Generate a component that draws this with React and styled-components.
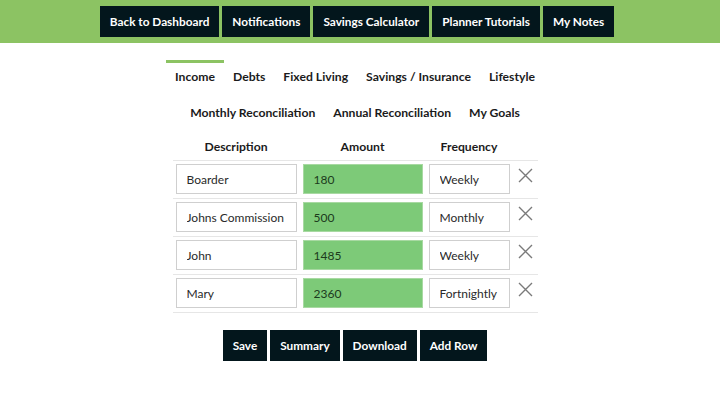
import React, { useState } from "react";
import styled, { createGlobalStyle } from "styled-components";

const GlobalStyle = createGlobalStyle`
  html, body {
    margin: 0;
    padding: 0;
    background: #ffffff;
    font-family: Lato, "Open Sans", Arial, sans-serif;
    color: #222;
  }
  * {
    box-sizing: border-box;
  }
`;

const Header = styled.header`
  background-color: #8cc363;
  height: 43px;
  padding: 6px 6px 0 0;
  display: flex;
  justify-content: center;
  align-items: flex-start;
  gap: 3px;
`;

const DarkButton = styled.button`
  height: 31px;
  padding: 0 10px;
  border: none;
  background-color: #03161c;
  color: #ffffff;
  font-family: Lato, sans-serif;
  font-weight: 700;
  font-size: 11.8px;
  cursor: pointer;
  white-space: nowrap;
`;

const Main = styled.main`
  width: 710px;
  display: flex;
  flex-direction: column;
  align-items: center;
  padding-top: 17px;
`;

const TabRow = styled.nav`
  display: flex;
  justify-content: center;
`;

const Tab = styled.div`
  padding: 4px 9px 9px;
  border-top: 3px solid ${(props) => (props.$active ? "#8cc363" : "transparent")};
  font-size: 12.2px;
  font-weight: 700;
  line-height: 20px;
  color: #1b1b1b;
  cursor: pointer;
  white-space: nowrap;
`;

const Table = styled.div`
  width: 365px;
  display: grid;
  grid-template-columns: 127px 126px 87px 25px;
  border-bottom: 1px solid #e6e6e6;
`;

const HeadCell = styled.div`
  padding: 5px 0 3px;
  line-height: 20px;
  font-size: 12.2px;
  font-weight: 700;
  text-align: center;
  color: #1b1b1b;
`;

const Cell = styled.div`
  border-top: 1px solid #e6e6e6;
  padding: 3px 3px 4px;
  display: flex;
  justify-content: center;
  align-items: flex-start;
`;

const Field = styled.input`
  width: 100%;
  height: 30px;
  padding: 0 9px 0 10px;
  border: 1px solid ${(props) => (props.$amount ? "#a8d9a2" : "#cfcfcf")};
  background-color: ${(props) => (props.$amount ? "#7dca78" : "#ffffff")};
  color: ${(props) => (props.$amount ? "#1c3a1c" : "#2a2a2a")};
  font-family: Lato, sans-serif;
  font-size: 12px;
  outline: none;
`;

const RemoveButton = styled.button`
  margin-top: 4px;
  padding: 0;
  border: none;
  background: none;
  cursor: pointer;
  line-height: 0;
`;

const Actions = styled.div`
  margin-top: 17px;
  display: flex;
  gap: 3px;
`;

const rowsData = [
  { id: 1, desc: "Boarder", amount: "180", freq: "Weekly" },
  { id: 2, desc: "Johns Commission", amount: "500", freq: "Monthly" },
  { id: 3, desc: "John", amount: "1485", freq: "Weekly" },
  { id: 4, desc: "Mary", amount: "2360", freq: "Fortnightly" },
];

const CloseIcon = () => (
  <svg width="15" height="15" viewBox="0 0 15 15">
    <path d="M1 1 L14 14 M14 1 L1 14" stroke="#7a7a7a" strokeWidth="1.4" fill="none" />
  </svg>
);

const App = () => {
  const [rows, setRows] = useState(rowsData);

  const remove = (id) => setRows((r) => r.filter((el) => el.id !== id));

  return (
    <>
      <GlobalStyle />
      <Header>
        <DarkButton>Back to Dashboard</DarkButton>
        <DarkButton>Notifications</DarkButton>
        <DarkButton>Savings Calculator</DarkButton>
        <DarkButton>Planner Tutorials</DarkButton>
        <DarkButton>My Notes</DarkButton>
      </Header>

      <Main>
        <TabRow>
          <Tab $active>Income</Tab>
          <Tab>Debts</Tab>
          <Tab>Fixed Living</Tab>
          <Tab>Savings / Insurance</Tab>
          <Tab>Lifestyle</Tab>
        </TabRow>
        <TabRow>
          <Tab>Monthly Reconciliation</Tab>
          <Tab>Annual Reconciliation</Tab>
          <Tab>My Goals</Tab>
        </TabRow>

        <Table>
          <HeadCell>Description</HeadCell>
          <HeadCell>Amount</HeadCell>
          <HeadCell>Frequency</HeadCell>
          <HeadCell />
          {rows.map((row) => (
            <React.Fragment key={row.id}>
              <Cell>
                <Field defaultValue={row.desc} />
              </Cell>
              <Cell>
                <Field $amount defaultValue={row.amount} />
              </Cell>
              <Cell>
                <Field defaultValue={row.freq} />
              </Cell>
              <Cell>
                <RemoveButton onClick={() => remove(row.id)}>
                  <CloseIcon />
                </RemoveButton>
              </Cell>
            </React.Fragment>
          ))}
        </Table>

        <Actions>
          <DarkButton>Save</DarkButton>
          <DarkButton>Summary</DarkButton>
          <DarkButton>Download</DarkButton>
          <DarkButton>Add Row</DarkButton>
        </Actions>
      </Main>
    </>
  );
};

export default App;
